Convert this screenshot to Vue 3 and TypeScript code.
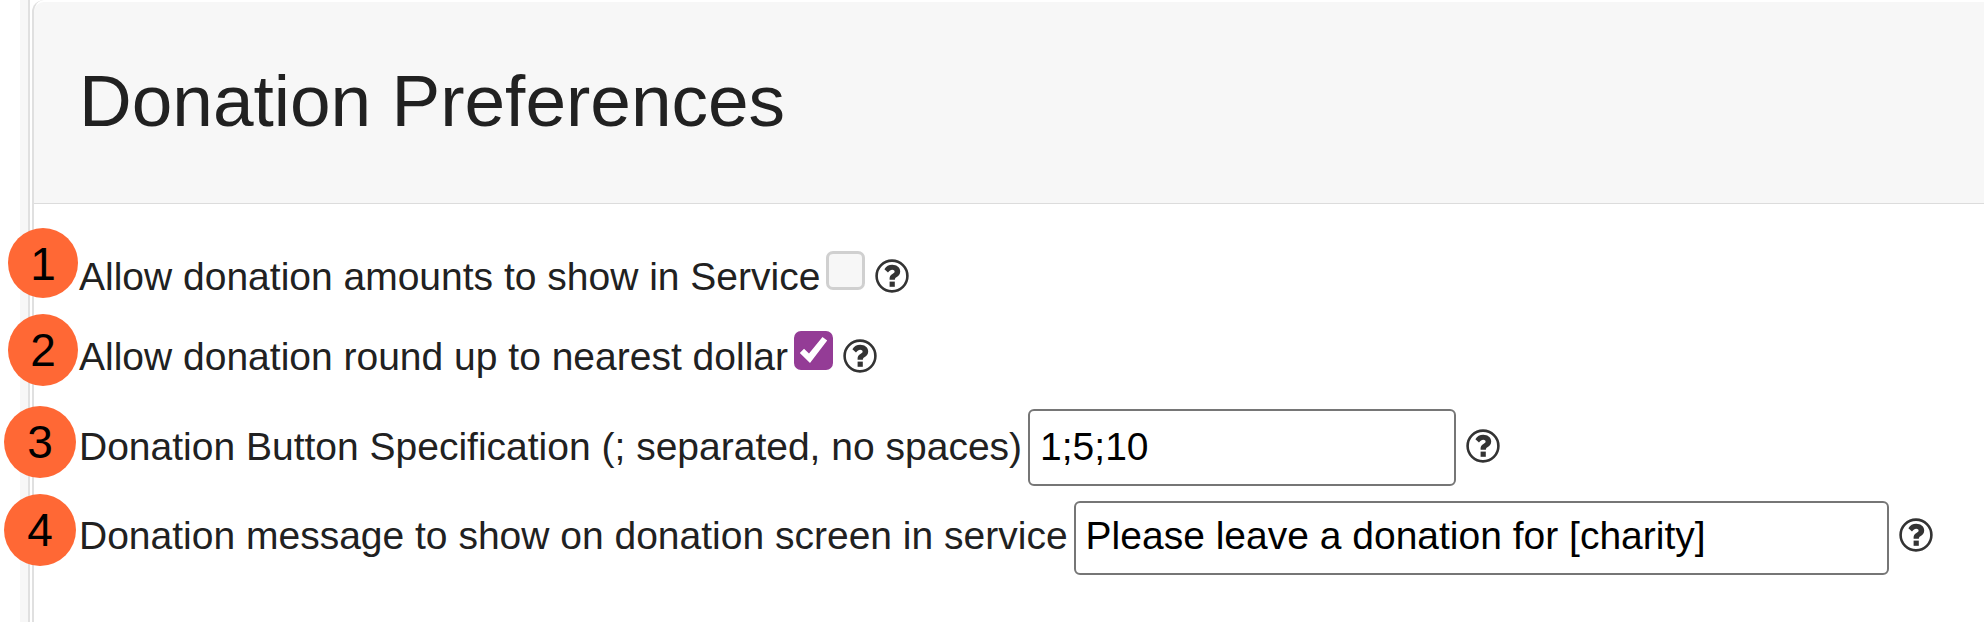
<script setup lang="ts">
import { reactive } from 'vue'

interface Preference {
  id: string
  step: number
  label: string
  kind: 'check' | 'text'
  checked?: boolean
  value?: string
}

const preferences = reactive<Preference[]>([
  { id: 'show-amounts', step: 1, label: 'Allow donation amounts to show in Service', kind: 'check', checked: false },
  { id: 'round-up', step: 2, label: 'Allow donation round up to nearest dollar', kind: 'check', checked: true },
  { id: 'buttons', step: 3, label: 'Donation Button Specification (; separated, no spaces)', kind: 'text', value: '1;5;10' },
  { id: 'message', step: 4, label: 'Donation message to show on donation screen in service', kind: 'text', value: 'Please leave a donation for [charity]' },
])
</script>

<template>
  <div class="page">
    <main class="frame">
      <section class="card">
        <header class="card-header">
          <h1>Donation Preferences</h1>
        </header>
        <form class="card-body" @submit.prevent>
          <div v-for="p in preferences" :key="p.id" class="row" :class="[p.kind, p.id]">
            <span class="badge">{{ p.step }}</span>
            <label :for="p.id">{{ p.label }}</label>
            <input v-if="p.kind === 'check'" :id="p.id" v-model="p.checked" type="checkbox" />
            <input v-else :id="p.id" v-model="p.value" type="text" />
            <button type="button" class="help" :aria-label="'Help: ' + p.label">
              <svg viewBox="0 0 34 34" aria-hidden="true">
                <circle cx="17" cy="17" r="15.4" fill="none" stroke="#333" stroke-width="2.6" />
                <path d="M9.4 10.2 C11.2 7.2 13.8 5.8 17.2 5.8 C21.8 5.8 25.2 8.6 25.2 12.5 C25.2 15.3 23.5 17 21.4 18.3 C20.1 19.1 19.9 19.7 19.9 20.8 H14.6 C14.4 18 15.2 16.4 17.4 15.1 C19 14.1 19.6 13.6 19.6 12.6 C19.6 11.4 18.6 10.7 17.2 10.7 C15.6 10.7 14.6 11.5 13 13.4 Z" fill="#333" />
                <rect x="14.6" y="22.6" width="5.2" height="5.2" fill="#333" />
              </svg>
            </button>
          </div>
        </form>
      </section>
    </main>
  </div>
</template>

<style>
body {
  background: #fff;
}
</style>

<style scoped>
.page {
  box-sizing: border-box;
  min-height: 100vh;
  display: flex;
  padding-left: 20px;
  overflow: hidden;
  font-family: "Liberation Sans", Arial, Helvetica, sans-serif;
  color: #212121;
}

.frame {
  flex: 1;
  min-width: 0;
  display: flex;
  border-left: 8px solid #f7f7f7;
}

.card {
  flex: 1;
  min-width: 0;
  position: relative;
  margin-left: 4px;
  border-left: 2px solid #e0e0e0;
  border-top-left-radius: 12px;
}

.card::before {
  content: "";
  position: absolute;
  top: 0;
  bottom: 0;
  left: -6px;
  width: 2px;
  background: #e0e0e0;
}

.card-header {
  margin-top: 2px;
  padding: 57px 45px 60px;
  background: #f7f7f7;
  border-bottom: 1px solid #dcdcdc;
  border-top-left-radius: 10px;
}

h1 {
  margin: 0;
  font-size: 73px;
  line-height: 84px;
  font-weight: 400;
}

.card-body {
  padding: 33px 0 40px 45px;
  font-size: 39px;
}

.row {
  position: relative;
  white-space: nowrap;
  line-height: 40px;
}

.row.check {
  line-height: 80px;
}

.row.buttons {
  margin-top: 12px;
}

.row.message {
  margin-top: 15px;
}

.badge {
  position: absolute;
  top: -9px;
  left: -71px;
  width: 70px;
  height: 70px;
  border-radius: 50%;
  background: #ff6835;
  color: #000;
  font-size: 46px;
  line-height: 72px;
  text-align: center;
}

.round-up .badge {
  top: -3px;
  height: 72px;
}

.text .badge {
  top: -3px;
  left: -75px;
  width: 72px;
  height: 72px;
}

.message .badge {
  top: -7px;
}

input {
  box-sizing: border-box;
  margin: 0 0 0 6px;
  appearance: none;
  vertical-align: baseline;
}

input[type="checkbox"] {
  width: 39px;
  height: 39px;
  border: 3px solid #d0d0d0;
  border-radius: 7px;
  background: #f7f7f7;
}

input[type="checkbox"]:checked {
  border-color: #943c96;
  background: #943c96 url("data:image/svg+xml,%3Csvg xmlns='http://www.w3.org/2000/svg' viewBox='0 0 39 39'%3E%3Cpath d='M5.8 22 L10 17.7 L15 22.5 L28.5 6 L33.2 9.6 L16 32 Z' fill='white'/%3E%3C/svg%3E") center / 39px 39px no-repeat;
}

input[type="text"] {
  height: 77px;
  width: 428px;
  padding: 0 10px 2px;
  border: 2px solid #767676;
  border-radius: 6px;
  background: #fff;
  color: #000;
  font: inherit;
}

.message input[type="text"] {
  height: 74px;
  width: 815px;
  padding-bottom: 5px;
}

.help {
  display: inline-flex;
  width: 34px;
  height: 34px;
  margin-left: 10px;
  padding: 0;
  border: 0;
  background: none;
  vertical-align: -3px;
}

.help svg {
  width: 34px;
  height: 34px;
}
</style>
